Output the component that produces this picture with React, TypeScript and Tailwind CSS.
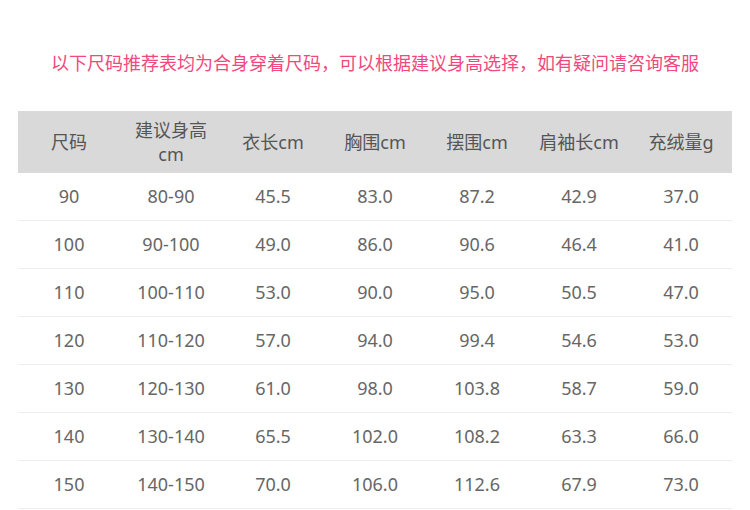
import React from 'react';

const headers = ['尺码', '建议身高cm', '衣长cm', '胸围cm', '摆围cm', '肩袖长cm', '充绒量g'];

const rows = [
  ['90', '80-90', '45.5', '83.0', '87.2', '42.9', '37.0'],
  ['100', '90-100', '49.0', '86.0', '90.6', '46.4', '41.0'],
  ['110', '100-110', '53.0', '90.0', '95.0', '50.5', '47.0'],
  ['120', '110-120', '57.0', '94.0', '99.4', '54.6', '53.0'],
  ['130', '120-130', '61.0', '98.0', '103.8', '58.7', '59.0'],
  ['140', '130-140', '65.5', '102.0', '108.2', '63.3', '66.0'],
  ['150', '140-150', '70.0', '106.0', '112.6', '67.9', '73.0'],
];

export default function App() {
  return (
    <div
      className="w-[750px] h-[510px] bg-white overflow-hidden"
      style={{ fontFamily: '"Noto Sans", "Noto Sans CJK SC", sans-serif' }}
    >
      {/* 标题 */}
      <p className="pt-[50px] text-center text-[18px] leading-[26px] text-[#f2487e]">
        以下尺码推荐表均为合身穿着尺码，可以根据建议身高选择，如有疑问请咨询客服
      </p>

      <div className="mt-[35px] mx-[18px] w-[714px]">
        <div className="grid grid-cols-7 h-[62px] bg-[#d9d9d9] text-[#555] text-[18px] leading-[24px]">
          {headers.map((h) => (
            <div key={h} className="flex items-center justify-center text-center px-[6px]">
              {h}
            </div>
          ))}
        </div>
        {rows.map((r) => (
          <div
            key={r[0]}
            className="grid grid-cols-7 h-[48px] border-b border-[#eeeeee] text-[#666] text-[18px]"
          >
            {r.map((c, i) => (
              <div key={i} className="flex items-center justify-center">
                {c}
              </div>
            ))}
          </div>
        ))}
      </div>
    </div>
  );
}
